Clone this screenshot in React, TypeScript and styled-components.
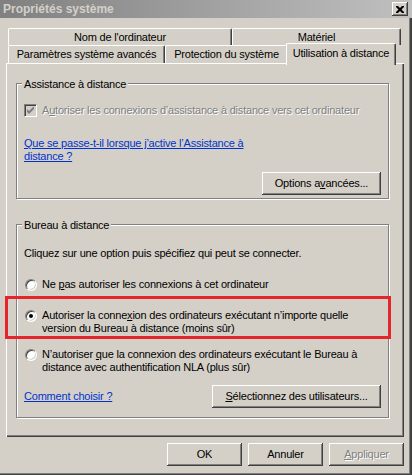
import styled, { createGlobalStyle, css } from "styled-components";

const GlobalStyle = createGlobalStyle`
  html, body {
    margin: 0;
    padding: 0;
    background: #d4d0c8;
  }
  body {
    font-family: "Liberation Sans", Arial, sans-serif;
    font-size: 11px;
    line-height: 13px;
    letter-spacing: -0.2px;
    color: #000;
  }
`;

const raised = css`
  box-shadow: inset -1px -1px #404040, inset 1px 1px #ffffff,
    inset -2px -2px #808080, inset 2px 2px #d4d0c8;
`;

const Window = styled.div`
  width: 412px;
  height: 475px;
  box-sizing: border-box;
  background: #d4d0c8;
  box-shadow: inset -2px -1px #404040, inset -3px -2px #808080;
  overflow: hidden;
`;

const TitleBar = styled.div`
  height: 18px;
  display: flex;
  align-items: center;
  justify-content: space-between;
  padding: 0 4px 0 3px;
  background: linear-gradient(to right, #808080, #c0c0c0);
`;

const Title = styled.span`
  font-weight: bold;
  font-size: 12px;
  letter-spacing: 0;
  color: #d4d0c8;
`;

const CloseButton = styled.div`
  width: 16px;
  height: 14px;
  display: flex;
  align-items: center;
  justify-content: center;
  background: #d4d0c8;
  ${raised}
`;

const Client = styled.div`
  padding: 10px 0 0 6px;
`;

const Tabs = styled.div`
  margin-left: 2px;
  display: flex;
  flex-direction: column;
`;

const TabRow = styled.div<{ $h: number }>`
  display: flex;
  align-items: flex-start;
  height: ${({ $h }) => $h}px;
`;

const Tab = styled.div<{ $w: number; $active?: boolean }>`
  box-sizing: border-box;
  width: ${({ $w }) => $w}px;
  height: 100%;
  display: flex;
  align-items: center;
  justify-content: center;
  white-space: nowrap;
  background: #d4d0c8;
  border-top: 1px solid #ffffff;
  border-left: 1px solid #ffffff;
  border-right: 1px solid #404040;
  border-radius: 2px 2px 0 0;
  box-shadow: inset -1px 0 #808080;
  ${({ $active }) =>
    $active &&
    css`
      position: relative;
      z-index: 1;
      height: 22px;
      margin: -2px 0 0 -2px;
      padding-bottom: 2px;
    `}
`;

const Panel = styled.div`
  box-sizing: border-box;
  width: 398px;
  height: 374px;
  padding: 20px 15px 0 10px;
  box-shadow: inset 1px 1px #ffffff, inset -1px -1px #404040,
    inset -2px -2px #808080;
`;

const Group = styled.div<{ $h: number; $gap?: number }>`
  box-sizing: border-box;
  height: ${({ $h }) => $h}px;
  margin-top: ${({ $gap = 0 }) => $gap}px;
  border: 1px solid #808080;
  box-shadow: inset 1px 1px #ffffff, 1px 1px #ffffff;
  display: flex;
  flex-direction: column;
`;

const GroupLabel = styled.div`
  align-self: flex-start;
  margin: -6px 0 0 5px;
  padding: 0 2px;
  background: #d4d0c8;
`;

const Text = styled.div<{ $top: number }>`
  margin-top: ${({ $top }) => $top}px;
  padding-left: 7px;
`;

const Link = styled.span`
  color: #0033cc;
  text-decoration: underline;
`;

const OptionRow = styled.div<{ $top: number; $disabled?: boolean }>`
  margin-top: ${({ $top }) => $top}px;
  padding-left: 8px;
  display: flex;
  align-items: flex-start;
  gap: 5px;
  ${({ $disabled }) =>
    $disabled &&
    css`
      padding-left: 7px;
      color: #808080;
      text-shadow: 1px 1px #ffffff;
    `}
`;

const Highlight = styled.div`
  margin: 5px -3px 0 -12px;
  height: 43px;
  box-sizing: border-box;
  border: 3px solid #e5252b;
  padding: 10px 0 0 17px;
  display: flex;
  align-items: flex-start;
  gap: 5px;
`;

const Radio = styled.span<{ $checked?: boolean }>`
  flex: none;
  box-sizing: border-box;
  width: 12px;
  height: 12px;
  margin-top: 1px;
  border-radius: 50%;
  background: #ffffff;
  border: 1px solid;
  border-color: #808080 #ffffff #ffffff #808080;
  box-shadow: inset 1px 1px #404040, inset -1px -1px #d4d0c8;
  display: flex;
  align-items: center;
  justify-content: center;
  &::after {
    content: "";
    width: 4px;
    height: 4px;
    border-radius: 50%;
    background: ${({ $checked }) => ($checked ? "#000" : "transparent")};
  }
`;

const CheckBox = styled.span`
  flex: none;
  box-sizing: border-box;
  width: 13px;
  height: 13px;
  background: #d4d0c8;
  border: 1px solid;
  border-color: #808080 #ffffff #ffffff #808080;
  box-shadow: inset 1px 1px #404040, inset -1px -1px #d4d0c8;
  display: flex;
  align-items: center;
  justify-content: center;
  text-shadow: none;
`;

const ButtonRow = styled.div<{ $top: number }>`
  margin-top: ${({ $top }) => $top}px;
  display: flex;
  align-items: center;
  justify-content: space-between;
  padding: 0 7px;
`;

const Button = styled.div<{ $w: number; $disabled?: boolean }>`
  box-sizing: border-box;
  width: ${({ $w }) => $w}px;
  height: 23px;
  display: flex;
  align-items: center;
  justify-content: center;
  white-space: nowrap;
  background: #d4d0c8;
  ${raised}
  ${({ $disabled }) =>
    $disabled &&
    css`
      color: #808080;
      text-shadow: 1px 1px #ffffff;
    `}
`;

const Footer = styled.div`
  margin-top: 6px;
  padding-right: 8px;
  display: flex;
  justify-content: flex-end;
  gap: 6px;
`;

export default function App() {
  return (
    <>
      <GlobalStyle />
      <Window>
        <TitleBar>
          <Title>Propriétés système</Title>
          <CloseButton>
            <svg width="8" height="7" viewBox="0 0 8 7">
              <path
                d="M0 0h2l2 2 2-2h2v1L5.5 3.5 8 6v1H6L4 5 2 7H0V6l2.5-2.5L0 1z"
                fill="#000"
              />
            </svg>
          </CloseButton>
        </TitleBar>
        <Client>
          <Tabs>
            <TabRow $h={17}>
              <Tab $w={224}>Nom de l'ordinateur</Tab>
              <Tab $w={169}>Matériel</Tab>
            </TabRow>
            <TabRow $h={18}>
              <Tab $w={157}>Paramètres système avancés</Tab>
              <Tab $w={123}>Protection du système</Tab>
              <Tab $w={110} $active>
                Utilisation à distance
              </Tab>
            </TabRow>
          </Tabs>
          <Panel>
            <Group $h={116}>
              <GroupLabel>Assistance à distance</GroupLabel>
              <OptionRow $top={13} $disabled>
                <CheckBox>
                  <svg width="7" height="7" viewBox="0 0 7 7">
                    <path d="M0 2v3l2 2 5-5V-1L2 4z" fill="#808080" />
                  </svg>
                </CheckBox>
                <span>
                  A<u>u</u>toriser les connexions d’assistance à distance vers
                  cet ordinateur
                </span>
              </OptionRow>
              <Text $top={20}>
                <Link>
                  Que se passe-t-il lorsque j’active l’Assistance à
                  <br />
                  distance ?
                </Link>
              </Text>
              <ButtonRow $top={9}>
                <span />
                <Button $w={119}>
                  Options a<u>v</u>ancées...
                </Button>
              </ButtonRow>
            </Group>
            <Group $h={194} $gap={25}>
              <GroupLabel>Bureau à distance</GroupLabel>
              <Text $top={15}>
                Cliquez sur une option puis spécifiez qui peut se connecter.
              </Text>
              <OptionRow $top={18}>
                <Radio />
                <span>
                  Ne <u>p</u>as autoriser les connexions à cet ordinateur
                </span>
              </OptionRow>
              <Highlight>
                <Radio $checked />
                <span>
                  Autoriser la conne<u>x</u>ion des ordinateurs exécutant
                  n’importe quelle
                  <br />
                  version du Bureau à distance (moins sûr)
                </span>
              </Highlight>
              <OptionRow $top={9}>
                <Radio />
                <span>
                  N’autoriser <u>q</u>ue la connexion des ordinateurs exécutant
                  le Bureau à
                  <br />
                  distance avec authentification NLA (plus sûr)
                </span>
              </OptionRow>
              <ButtonRow $top={11}>
                <Link>Comment choisir ?</Link>
                <Button $w={169}>
                  <u>S</u>électionnez des utilisateurs...
                </Button>
              </ButtonRow>
            </Group>
          </Panel>
          <Footer>
            <Button $w={75}>OK</Button>
            <Button $w={75}>Annuler</Button>
            <Button $w={75} $disabled>
              <u>A</u>ppliquer
            </Button>
          </Footer>
        </Client>
      </Window>
    </>
  );
}
